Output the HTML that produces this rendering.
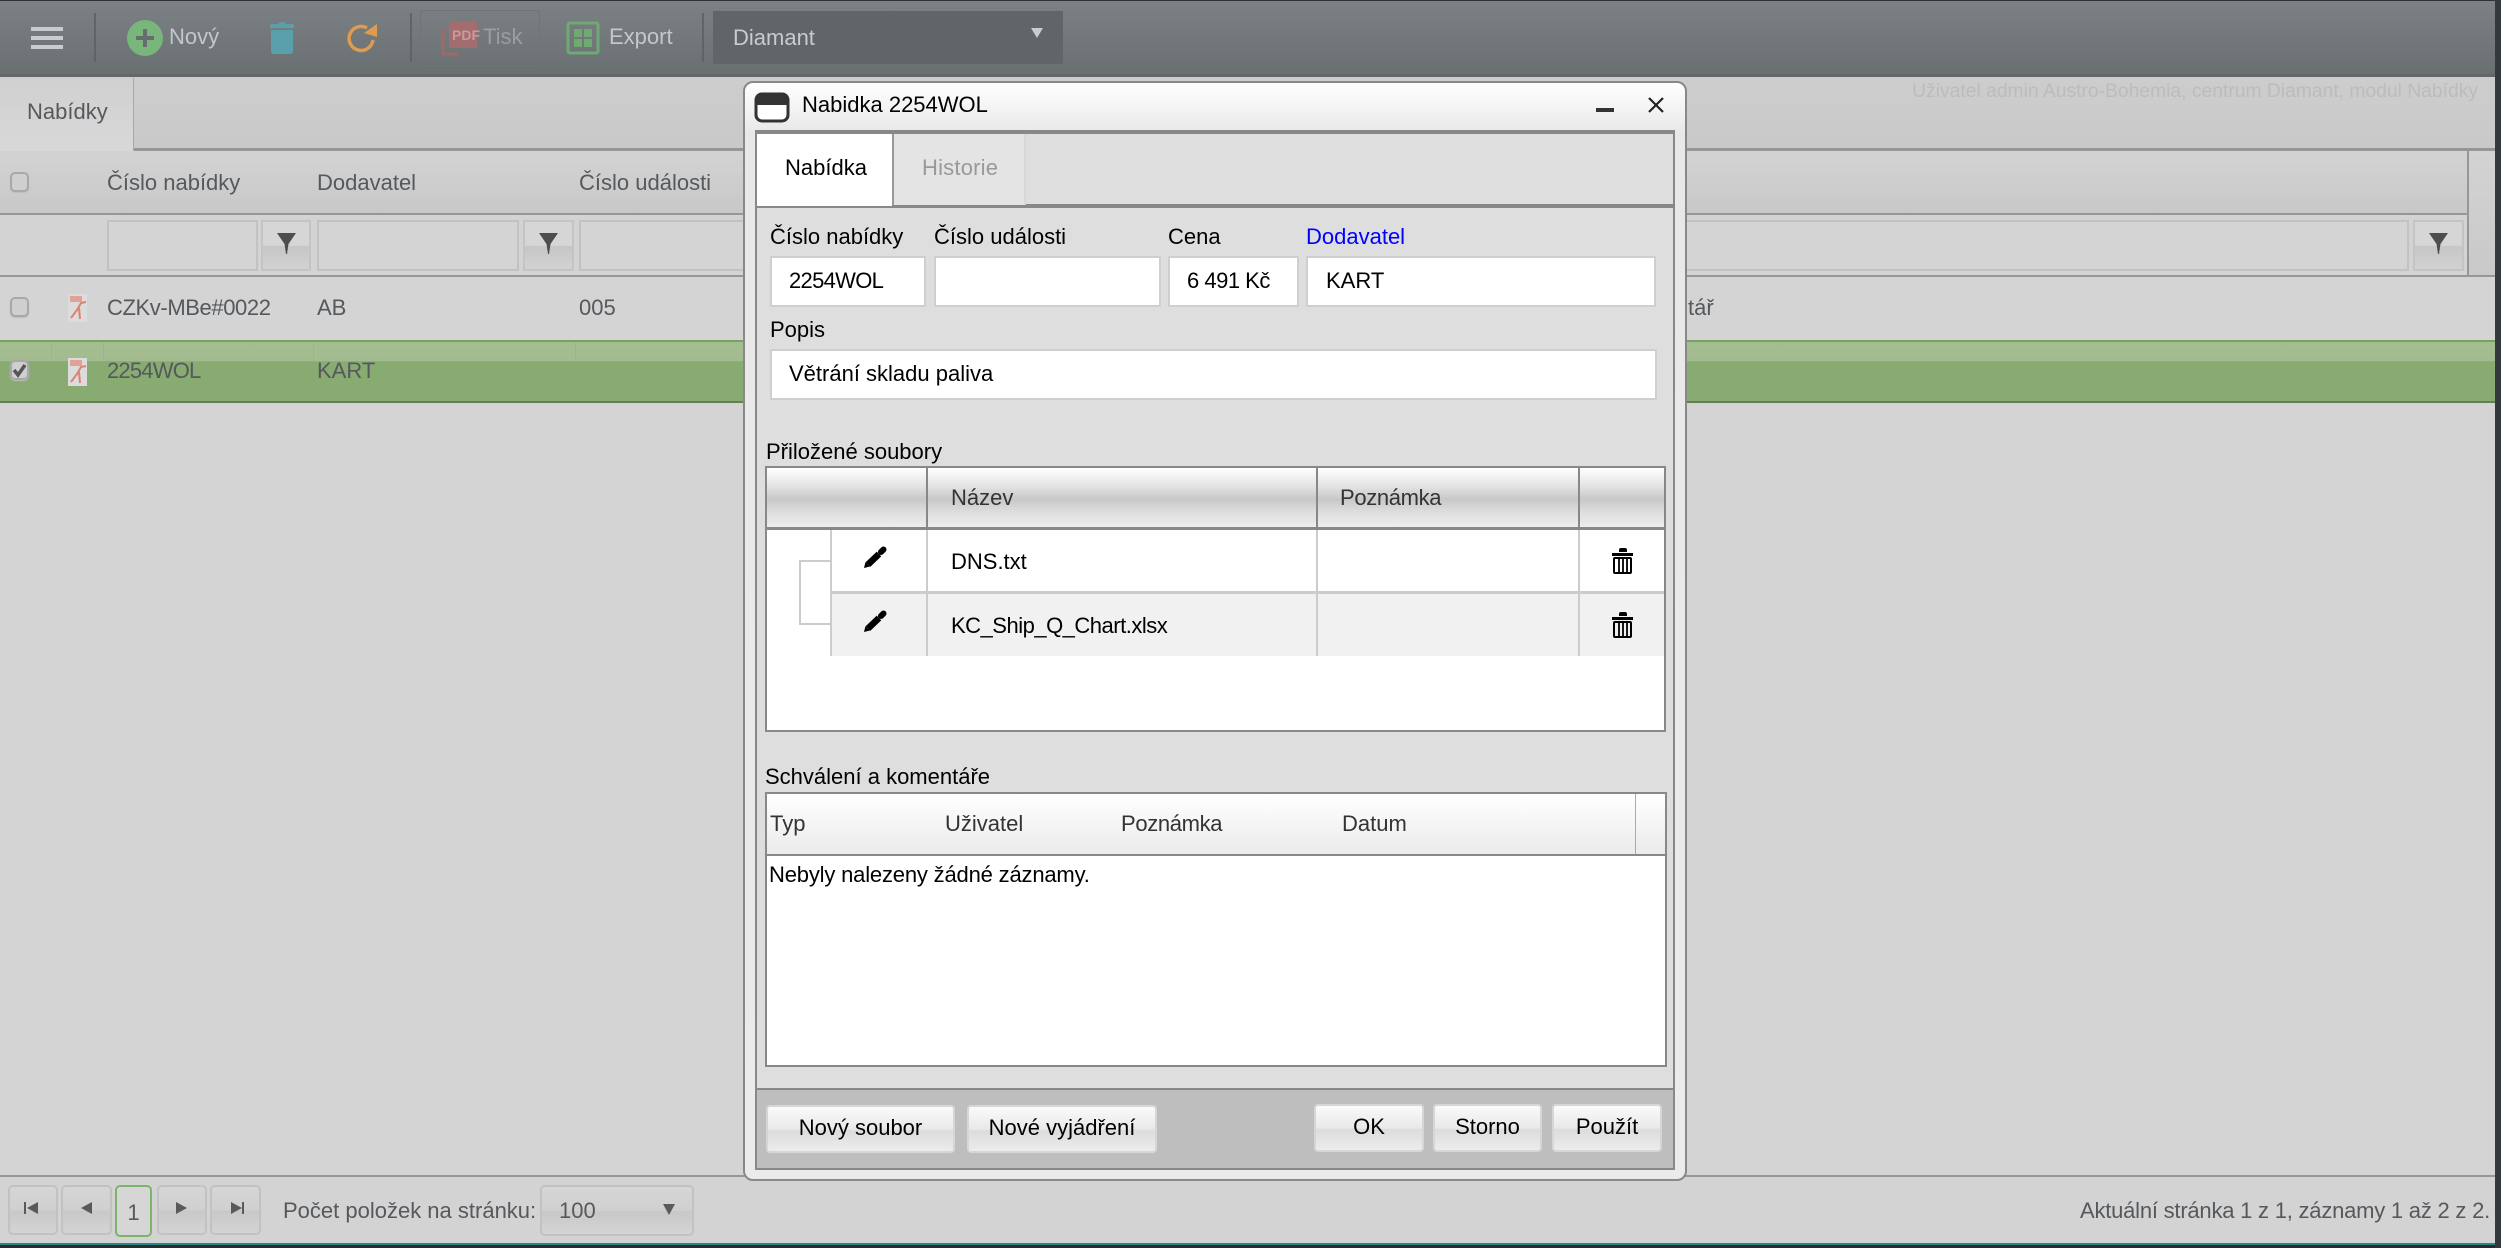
<!DOCTYPE html>
<html lang="cs"><head><meta charset="utf-8"><title>Nabídky</title>
<style>
html,body{margin:0;padding:0;width:2501px;height:1248px;overflow:hidden;background:#d4d4d4}
body{position:relative;font:22px/30px "Liberation Sans",sans-serif;color:#55595d}
.a{position:absolute;box-sizing:border-box}
.t{position:absolute;white-space:nowrap;line-height:30px}
.inp{position:absolute;box-sizing:border-box;background:#d4d4d4;border:2px solid #c2c2c2}
.fb{position:absolute;box-sizing:border-box;border:2px solid #c4c4c4;background:linear-gradient(#d6d6d6 0,#d6d6d6 50%,#c6c6c6 52%,#d2d2d2 100%)}
.pb{position:absolute;box-sizing:border-box;top:1185px;height:50px;border:2px solid #c2c2c2;border-radius:5px;background:linear-gradient(#d6d6d6 0,#d0d0d0 50%,#c8c8c8 52%,#d4d4d4 100%)}
.d{color:#000}
.w{position:absolute;box-sizing:border-box;background:#fff;border:2px solid #cfcfcf}
.btn{position:absolute;box-sizing:border-box;border:2px solid #d6d6d6;border-radius:4px;background:linear-gradient(#fafafa 0,#e9e9e9 50%,#dcdcdc 54%,#ececec 100%);color:#000;text-align:center;line-height:42px}
.line{position:absolute;background:#888}
.lc{position:absolute;background:#ccc}
.cb{position:absolute;box-sizing:border-box;width:19px;height:20px;border:2px solid #a8a8a8;border-radius:5px;background:#cfcfcf;box-shadow:0 1px 1px #bdbdbd}
</style></head><body>

<!-- toolbar -->
<div class="a" style="left:0;top:0;width:2501px;height:77px;background:linear-gradient(#7b8184,#6a6f72);border-top:1px solid #333;border-bottom:3px solid #636769"></div>
<div class="a" style="left:94px;top:13px;width:2px;height:49px;background:#5f6467"></div>
<div class="a" style="left:410px;top:13px;width:2px;height:49px;background:#5f6467"></div>
<div class="a" style="left:702px;top:13px;width:2px;height:49px;background:#5f6467"></div>
<div class="a" style="left:420px;top:10px;width:120px;height:56px;border:1px solid #6f7477;border-radius:4px"></div>
<div class="t" style="left:169px;top:22px;color:#c3c7cb">Nový</div>
<div class="t" style="left:483px;top:22px;color:#9a9ea1">Tisk</div>
<div class="t" style="left:609px;top:22px;color:#c3c7cb">Export</div>
<div class="a" style="left:713px;top:11px;width:350px;height:53px;background:#606568"></div>
<div class="t" style="left:733px;top:23px;color:#c8cccf">Diamant</div>

<!-- tab strip -->
<div class="a" style="left:0;top:77px;width:2501px;height:74px;background:linear-gradient(#cdcdcd,#c9c9c9);border-bottom:3px solid #969696"></div>
<div class="a" style="left:0;top:78px;width:134px;height:73px;background:linear-gradient(#d0d0d0,#d8d8d8);border-right:1px solid #a8a8a8"></div>
<div class="t" style="left:27px;top:97px">Nabídky</div>
<div class="t" style="right:23px;top:77px;color:#bcbcbc;font-size:19.3px">Uživatel admin Austro-Bohemia, centrum Diamant, modul Nabídky</div>

<!-- grid header -->
<div class="a" style="left:0;top:151px;width:2501px;height:64px;background:linear-gradient(#d3d3d3,#c8c8c8);border-bottom:2px solid #979797"></div>
<div class="t" style="left:107px;top:168px">Číslo nabídky</div>
<div class="t" style="left:317px;top:168px">Dodavatel</div>
<div class="t" style="left:579px;top:168px">Číslo události</div>
<div class="cb" style="left:10px;top:172px"></div>
<!-- filter row -->
<div class="a" style="left:0;top:215px;width:2501px;height:62px;background:#d3d3d3;border-bottom:2px solid #979797"></div>
<div class="a" style="left:2467px;top:151px;width:28px;height:126px;background:linear-gradient(#d3d3d3,#c9c9c9);border-left:2px solid #979797;border-bottom:2px solid #979797"></div>
<div class="a" style="left:0;top:213px;width:2467px;height:2px;background:#979797"></div>
<div class="inp" style="left:107px;top:220px;width:151px;height:51px"></div>
<div class="fb" style="left:261px;top:220px;width:50px;height:51px"></div>
<div class="inp" style="left:317px;top:220px;width:202px;height:51px"></div>
<div class="fb" style="left:523px;top:220px;width:51px;height:51px"></div>
<div class="inp" style="left:579px;top:220px;width:1830px;height:51px"></div>
<div class="fb" style="left:2413px;top:220px;width:51px;height:51px"></div>

<!-- rows -->
<div class="t" style="left:107px;top:293px;letter-spacing:-.4px">CZKv-MBe#0022</div>
<div class="t" style="left:317px;top:293px">AB</div>
<div class="t" style="left:579px;top:293px">005</div>
<div class="t" style="left:1688px;top:293px">tář</div>
<div class="cb" style="left:10px;top:297px"></div>
<div class="a" style="left:0;top:340px;width:2501px;height:63px;border-top:2px solid #72a460;border-bottom:2px solid #647f55;background:linear-gradient(#a5be91 0,#a3bc8f 32%,#88ab72 33%,#88ab72 100%)"></div>
<div class="a" style="left:51px;top:342px;width:1px;height:19px;background:#9cb688"></div>
<div class="a" style="left:103px;top:342px;width:1px;height:19px;background:#9cb688"></div>
<div class="a" style="left:313px;top:342px;width:1px;height:19px;background:#9cb688"></div>
<div class="a" style="left:575px;top:342px;width:1px;height:19px;background:#9cb688"></div>
<div class="t" style="left:107px;top:356px;letter-spacing:-.8px">2254WOL</div>
<div class="t" style="left:317px;top:356px">KART</div>
<div class="cb" style="left:10px;top:360px"></div>

<!-- footer -->
<div class="a" style="left:0;top:1175px;width:2501px;height:69px;background:#d3d3d3;border-top:2px solid #979797"></div>
<div class="pb" style="left:8px;width:50px"></div>
<div class="pb" style="left:61px;width:51px"></div>
<div class="a" style="left:115px;top:1185px;width:37px;height:52px;border:2px solid #7cb46c;border-radius:5px;background:#d6d6d6;text-align:center;line-height:51px">1</div>
<div class="pb" style="left:157px;width:50px"></div>
<div class="pb" style="left:210px;width:51px"></div>
<div class="t" style="left:283px;top:1196px">Počet položek na stránku:</div>
<div class="pb" style="left:540px;width:154px;height:51px"></div>
<div class="t" style="left:559px;top:1196px">100</div>
<div class="t" style="right:11px;top:1196px;letter-spacing:-.22px">Aktuální stránka 1 z 1, záznamy 1 až 2 z 2.</div>
<div class="a" style="left:0;top:1243px;width:2501px;height:2px;background:#1f8a8a"></div>
<div class="a" style="left:0;top:1245px;width:2501px;height:3px;background:#2b2b2b"></div>
<div class="a" style="left:2495px;top:0;width:6px;height:1248px;background:#333a3c"></div>

<!-- dialog -->
<div class="a" style="left:743px;top:81px;width:944px;height:1100px;border:2px solid #888;border-radius:10px;background:linear-gradient(#fff 0,#e8e8e8 50px,#ebebeb 100%)"></div>
<div class="t d" style="left:802px;top:90px">Nabidka 2254WOL</div>
<div class="a" style="left:755px;top:130px;width:920px;height:1040px;background:#dedede;border:2px solid #888"></div>
<div class="a" style="left:757px;top:204px;width:916px;height:4px;background:#888"></div>
<div class="a" style="left:755px;top:130px;width:920px;height:4px;background:#888"></div>
<div class="a" style="left:757px;top:134px;width:135px;height:72px;background:#fff"></div>
<div class="a" style="left:892px;top:134px;width:134px;height:71px;background:#e4e4e4;border-left:2px solid #999;border-right:2px solid #d8d8d8"></div>
<div class="t d" style="left:785px;top:153px">Nabídka</div>
<div class="t" style="left:922px;top:153px;color:#999;letter-spacing:.2px">Historie</div>

<div class="t d" style="left:770px;top:222px">Číslo nabídky</div>
<div class="t d" style="left:934px;top:222px">Číslo události</div>
<div class="t d" style="left:1168px;top:222px">Cena</div>
<div class="t" style="left:1306px;top:222px;color:#0000ff">Dodavatel</div>
<div class="w" style="left:770px;top:256px;width:156px;height:51px"></div>
<div class="w" style="left:934px;top:256px;width:227px;height:51px"></div>
<div class="w" style="left:1168px;top:256px;width:131px;height:51px"></div>
<div class="w" style="left:1306px;top:256px;width:350px;height:51px"></div>
<div class="t d" style="left:789px;top:266px;letter-spacing:-.7px">2254WOL</div>
<div class="t d" style="left:1187px;top:266px;letter-spacing:-.5px">6 491 Kč</div>
<div class="t d" style="left:1326px;top:266px">KART</div>
<div class="t d" style="left:770px;top:315px">Popis</div>
<div class="w" style="left:770px;top:349px;width:887px;height:51px"></div>
<div class="t d" style="left:789px;top:359px">Větrání skladu paliva</div>

<!-- files -->
<div class="t d" style="left:766px;top:437px">Přiložené soubory</div>
<div class="a" style="left:765px;top:466px;width:901px;height:266px;background:#fff;border:2px solid #888"></div>
<div class="a" style="left:767px;top:468px;width:897px;height:60px;background:linear-gradient(#fff 0,#e4e4e4 30%,#c8c8c8 52%,#dcdcdc 72%,#efefef 100%)"></div>
<div class="line" style="left:767px;top:527px;width:897px;height:3px"></div>
<div class="line" style="left:926px;top:468px;width:2px;height:60px"></div>
<div class="line" style="left:1316px;top:468px;width:2px;height:60px"></div>
<div class="line" style="left:1578px;top:468px;width:2px;height:60px"></div>
<div class="t" style="left:951px;top:483px;color:#333">Název</div>
<div class="t" style="left:1340px;top:483px;color:#333;letter-spacing:-.35px">Poznámka</div>
<div class="a" style="left:831px;top:593px;width:833px;height:63px;background:#f1f1f1"></div>
<div class="lc" style="left:831px;top:591px;width:833px;height:3px"></div>
<div class="lc" style="left:830px;top:530px;width:2px;height:126px"></div>
<div class="lc" style="left:926px;top:530px;width:2px;height:126px"></div>
<div class="lc" style="left:1316px;top:530px;width:2px;height:126px"></div>
<div class="lc" style="left:1578px;top:530px;width:2px;height:126px"></div>
<div class="a" style="left:799px;top:560px;width:32px;height:65px;border:2px solid #ccc;border-right:0"></div>
<div class="t d" style="left:951px;top:547px">DNS.txt</div>
<div class="t d" style="left:951px;top:611px;letter-spacing:-.5px">KC_Ship_Q_Chart.xlsx</div>

<!-- comments -->
<div class="t d" style="left:765px;top:762px">Schválení a komentáře</div>
<div class="a" style="left:765px;top:792px;width:902px;height:275px;background:#fff;border:2px solid #888"></div>
<div class="a" style="left:767px;top:794px;width:898px;height:60px;background:linear-gradient(#fff,#ebebeb)"></div>
<div class="line" style="left:767px;top:854px;width:898px;height:2px"></div>
<div class="a" style="left:1635px;top:794px;width:1px;height:60px;background:#aaa"></div>
<div class="t" style="left:770px;top:809px;color:#333">Typ</div>
<div class="t" style="left:945px;top:809px;color:#333">Uživatel</div>
<div class="t" style="left:1121px;top:809px;color:#333;letter-spacing:-.35px">Poznámka</div>
<div class="t" style="left:1342px;top:809px;color:#333">Datum</div>
<div class="t d" style="left:769px;top:860px;letter-spacing:-.18px">Nebyly nalezeny žádné záznamy.</div>

<!-- dialog footer -->
<div class="a" style="left:755px;top:1088px;width:920px;height:82px;background:#bebebe;border:2px solid #888;border-top-width:2px"></div>
<div class="btn" style="left:766px;top:1105px;width:189px;height:48px">Nový soubor</div>
<div class="btn" style="left:967px;top:1105px;width:190px;height:48px">Nové vyjádření</div>
<div class="btn" style="left:1314px;top:1104px;width:110px;height:48px">OK</div>
<div class="btn" style="left:1433px;top:1104px;width:109px;height:48px">Storno</div>
<div class="btn" style="left:1552px;top:1104px;width:110px;height:48px">Použít</div>

<!-- icons -->
<svg class="a" style="left:0;top:0" width="2501" height="1248" viewBox="0 0 2501 1248">
<g fill="#c9cccf"><rect x="31" y="27" width="32" height="4"/><rect x="31" y="36" width="32" height="4"/><rect x="31" y="45" width="32" height="4"/></g>
<circle cx="145" cy="38" r="18" fill="#79b67b"/><path d="M145 29v18M136 38h18" stroke="#676c6f" stroke-width="4" fill="none"/>
<path d="M270 26q0-2 2-2h6q1-2 3-2h2q2 0 3 2h6q2 0 2 2v2h-24z" fill="#5aa0aa"/><path d="M271 30h22v21q0 3-3 3h-16q-3 0-3-3z" fill="#5aa0aa"/>
<path d="M373 40a12 12 0 1 1-6-12" fill="none" stroke="#dd9c4f" stroke-width="3.500"/><path d="M364 33l13-9v13z" fill="#dd9c4f"/>
<path d="M443 27v27h16" fill="none" stroke="#9d6a6a" stroke-width="3"/><rect x="449" y="21" width="28" height="27" rx="2" fill="#a36d6f"/><text x="452" y="40" font-family="Liberation Sans" font-size="14" font-weight="bold" fill="#c99">PDF</text>
<rect x="568" y="23" width="30" height="30" rx="2" fill="none" stroke="#6eaa72" stroke-width="3"/><g fill="#6eaa72"><rect x="574" y="29" width="8" height="8"/><rect x="584" y="29" width="8" height="8"/><rect x="574" y="39" width="8" height="8"/><rect x="584" y="39" width="8" height="8"/></g>
<path d="M1031 28h12l-6 10z" fill="#c8cccf"/>
<!-- funnels -->
<g fill="#4d4d4d"><path d="M277 233h19l-7.500 11-1.500 10h-1l-1.500-10z"/><path d="M539 233h19l-7.500 11-1.500 10h-1l-1.500-10z"/><path d="M2429 233h19l-7.500 11-1.500 10h-1l-1.500-10z"/></g>
<!-- checkbox tick -->
<path d="M14 370l4 5 7-10" fill="none" stroke="#555" stroke-width="3.500"/>
<!-- pdf row icons -->
<g><rect x="68" y="294" width="19" height="28" fill="#dcdcdc"/><rect x="70" y="296" width="12" height="6" fill="#e0a298"/><path d="M71 318l6-8 4-7 5-1M79 308l1 11" fill="none" stroke="#e0695a" stroke-width="2" opacity=".8"/></g>
<g transform="translate(0,64)"><rect x="68" y="294" width="19" height="28" fill="#dcdcdc"/><rect x="70" y="296" width="12" height="6" fill="#e0a298"/><path d="M71 318l6-8 4-7 5-1M79 308l1 11" fill="none" stroke="#e0695a" stroke-width="2" opacity=".8"/></g>
<!-- footer nav -->
<g fill="#5a5a5a"><path d="M24 1202h2v12h-2zM38 1202v12l-11-6z"/><path d="M92 1202v12l-11-6z"/><path d="M176 1202v12l11-6z"/><path d="M231 1202v12l11-6zM242 1202h2v12h-2z"/><path d="M663 1204h12l-6 11z"/></g>
<!-- dialog icon -->
<rect x="756" y="94" width="32" height="27" rx="6" fill="#fff" stroke="#333" stroke-width="3"/><path d="M755 99a6 6 0 0 1 6-6h22a6 6 0 0 1 6 6v6h-34z" fill="#333"/>
<path d="M1596 108h18v4h-18z" fill="#333"/><path d="M1649 98l14 14M1663 98l-14 14" stroke="#222" stroke-width="2.200" fill="none"/>
<!-- pencils -->
<g id="pen"><path d="M868 564.500l11-10.500" stroke="#000" stroke-width="6.500" fill="none"/><path d="M881 552l2.500-2.500" stroke="#000" stroke-width="6" stroke-linecap="round" fill="none"/><path d="M864 568l1.500-6 4.500 4.500z" fill="#000"/></g>
<g transform="translate(0,64)"><path d="M868 564.500l11-10.500" stroke="#000" stroke-width="6.500" fill="none"/><path d="M881 552l2.500-2.500" stroke="#000" stroke-width="6" stroke-linecap="round" fill="none"/><path d="M864 568l1.500-6 4.500 4.500z" fill="#000"/></g>
<!-- trash -->
<g><path d="M1619 552h8v-2q0-2-2-2h-4q-2 0-2 2z M1612 553h21v3h-21z" fill="#000"/><path d="M1615 558h15q1 0 1 1v13q0 1-1 1h-15q-1 0-1-1v-13q0-1 1-1z" fill="none" stroke="#000" stroke-width="2"/><path d="M1619 559v13M1623 559v13M1627 559v13" stroke="#000" stroke-width="1.800"/></g>
<g transform="translate(0,64)"><path d="M1619 552h8v-2q0-2-2-2h-4q-2 0-2 2z M1612 553h21v3h-21z" fill="#000"/><path d="M1615 558h15q1 0 1 1v13q0 1-1 1h-15q-1 0-1-1v-13q0-1 1-1z" fill="none" stroke="#000" stroke-width="2"/><path d="M1619 559v13M1623 559v13M1627 559v13" stroke="#000" stroke-width="1.800"/></g>
</svg>
</body></html>
